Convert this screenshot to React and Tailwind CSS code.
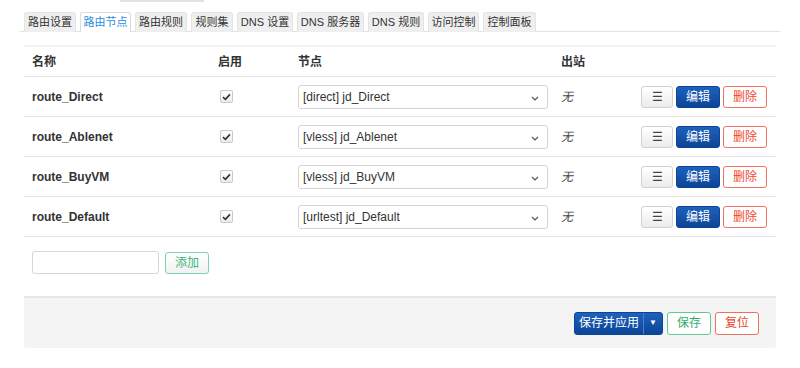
import React from "react";

const tabs = [
  ["路由设置", "w-[52px]"],
  ["路由节点", "w-[51px]"],
  ["路由规则", "w-[52px]"],
  ["规则集", "w-[42px]"],
  ["DNS 设置", "w-[56px]"],
  ["DNS 服务器", "w-[67px]"],
  ["DNS 规则", "w-[56px]"],
  ["访问控制", "w-[51px]"],
  ["控制面板", "w-[53px]"],
];
const rows = [
  { name: "route_Direct", node: "[direct] jd_Direct" },
  { name: "route_Ablenet", node: "[vless] jd_Ablenet" },
  { name: "route_BuyVM", node: "[vless] jd_BuyVM" },
  { name: "route_Default", node: "[urltest] jd_Default" },
];

function Check() {
  return (
    <span className="inline-flex h-[13px] w-[13px] items-center justify-center rounded-[2px] border border-[#c8c8c8] bg-gradient-to-b from-white to-[#ececec]">
      <svg width="9" height="8" viewBox="0 0 9 8">
        <path d="M1 4.2 L3.4 6.4 L8 1.4" fill="none" stroke="#333" strokeWidth="1.6" />
      </svg>
    </span>
  );
}

function Chevron() {
  return (
    <svg width="8" height="5" viewBox="0 0 8 5" className="absolute right-[8px] top-[10px]">
      <path d="M1 1 L4 4 L7 1" fill="none" stroke="#555" strokeWidth="1.2" />
    </svg>
  );
}

export default function App() {
  return (
    <div className="relative h-[368px] w-[800px] bg-white text-[12px] text-[#333]" style={{ fontFamily: '"Liberation Sans", Arial, "Noto Sans CJK SC", sans-serif' }}>
      <div className="absolute left-[120px] top-0 h-[2px] w-[84px] bg-[#e2e2e2]" />
      <div className="pl-[20px] pr-[20px] pt-[12px]">
        <div className="flex gap-[4px] border-b border-[#e2e2e2] pl-[4px]">
          {tabs.map(([t, w], i) => (
            <div
              key={t}
              className={
                "-mb-px flex h-[20px] shrink-0 items-center justify-center whitespace-nowrap rounded-t-[3px] border border-b-0 text-[11px] leading-none " +
                w +
                " " +
                (i === 1 ? "border-[#dcdcdc] bg-white text-[#2a8be0]" : "border-[#e4e4e4] bg-[#efefef] text-[#333]")
              }
            >
              {t}
            </div>
          ))}
        </div>
      </div>

      <div className="mx-[24px] mt-[13px]">
        <div className="border-t-[2px] border-[#f2f2f2]">
          <div className="flex h-[30px] items-center border-b border-[#e4e4e4] font-bold">
            <div className="w-[186px] pl-[8px]">名称</div>
            <div className="w-[80px] pl-[8px]">启用</div>
            <div className="w-[265px] pl-[8px]">节点</div>
            <div className="pl-[6px]">出站</div>
          </div>
          {rows.map((r) => (
            <div key={r.name} className="flex h-[40px] items-center border-b border-[#e4e4e4]">
              <div className="w-[186px] pl-[8px] font-bold">{r.name}</div>
              <div className="w-[80px] pl-[10px]"><Check /></div>
              <div className="w-[265px] pl-[8px]">
                <div className="relative flex h-[24px] w-[250px] items-center rounded-[3px] border border-[#d4d4d4] bg-white pl-[4px] text-[12px]">
                  {r.node}
                  <Chevron />
                </div>
              </div>
              <div className="w-[80px] pl-[6px] italic text-[#444]">无</div>
              <div className="flex flex-1 justify-end gap-[3px] pr-[9px]">
                <button className="flex h-[22px] w-[32px] items-center justify-center rounded-[3px] border border-[#d2d2d2] bg-gradient-to-b from-white to-[#ececec] text-[12px] text-[#444]">☰</button>
                <button className="flex h-[22px] w-[44px] items-center justify-center rounded-[3px] border border-[#0c4595] bg-gradient-to-b from-[#1d62bd] to-[#0c4597] text-white">编辑</button>
                <button className="flex h-[22px] w-[44px] items-center justify-center rounded-[3px] border border-[#f4715f] bg-white text-[#ec4a30]">删除</button>
              </div>
            </div>
          ))}
          <div className="flex items-center gap-[6px] pl-[8px] pt-[14px]">
            <div className="h-[23px] w-[127px] rounded-[3px] border border-[#d6d6d6] bg-white" />
            <button className="flex h-[22px] w-[44px] items-center justify-center rounded-[3px] border border-[#7fd3a8] bg-gradient-to-b from-white to-[#f2f2f2] text-[#3cb57a]">添加</button>
          </div>
        </div>

        <div className="mt-[22px] flex h-[52px] items-center justify-end gap-[4px] rounded-b-[3px] border-t-[2px] border-[#e6e6e6] bg-[#f4f4f4] pr-[17px]">
          <div className="flex h-[23px] overflow-hidden rounded-[3px] border border-[#0c4595] bg-gradient-to-b from-[#1d62bd] to-[#0c4597] text-white">
            <div className="flex w-[69px] items-center justify-center border-r border-[#4a7fc8]">保存并应用</div>
            <div className="flex w-[18px] items-center justify-center text-[8px]">▼</div>
          </div>
          <button className="flex h-[23px] w-[44px] items-center justify-center rounded-[3px] border border-[#64c994] bg-white text-[#2fae6b]">保存</button>
          <button className="flex h-[23px] w-[44px] items-center justify-center rounded-[3px] border border-[#f0705e] bg-white text-[#e8452b]">复位</button>
        </div>
      </div>
    </div>
  );
}
